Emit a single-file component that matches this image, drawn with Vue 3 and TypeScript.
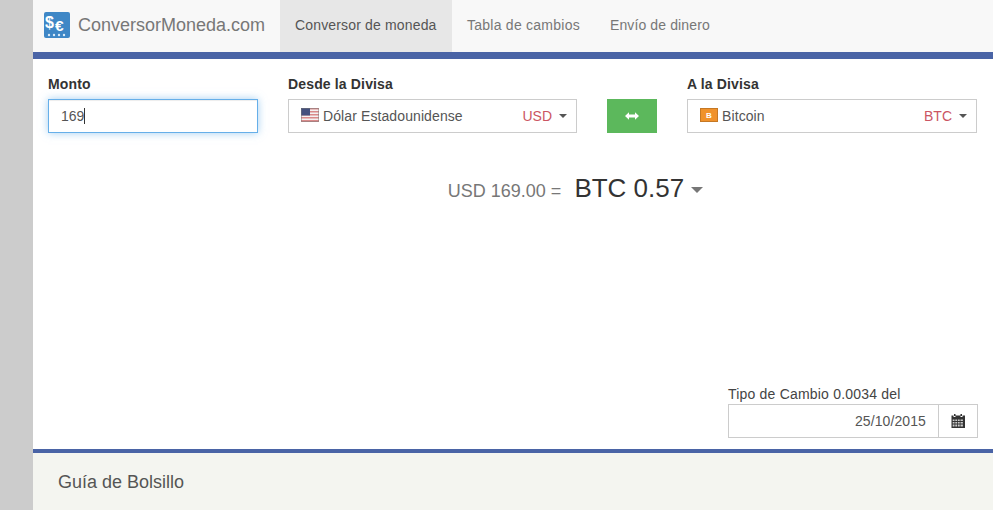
<script setup lang="ts">
const tabs = [
  { label: 'Conversor de moneda', active: true },
  { label: 'Tabla de cambios', active: false },
  { label: 'Envío de dinero', active: false }
]
</script>

<template>
  <div class="page">
    <div class="wrap">
      <nav class="navbar">
        <a class="brand">
          <svg class="logo" width="26" height="26" viewBox="0 0 26 26">
            <rect width="26" height="26" rx="2" fill="#3f87c6" />
            <text x="1" y="16" class="logo-text" font-size="16">$</text>
            <text x="11" y="19" class="logo-text" font-size="15.500">€</text>
            <g fill="#dcebf7">
              <circle cx="5" cy="23" r="1.200" />
              <circle cx="10" cy="23" r="1.200" />
              <circle cx="15" cy="23" r="1.200" />
              <circle cx="20" cy="23" r="1.200" />
            </g>
          </svg>
          <span>ConversorMoneda.com</span>
        </a>
        <a v-for="t in tabs" :key="t.label" class="tab" :class="{ active: t.active }">{{ t.label }}</a>
      </nav>

      <main class="content">
        <div class="form-row">
          <div class="field">
            <label>Monto</label>
            <div class="amount"><span>169</span><i class="caret-line"></i></div>
          </div>
          <div class="field">
            <label>Desde la Divisa</label>
            <div class="select">
              <svg class="flag" width="18" height="14" viewBox="0 0 18 14">
                <rect width="18" height="14" fill="#f4f1f1" />
                <g fill="#d98a8a">
                  <rect y="0" width="18" height="1.500" />
                  <rect y="3" width="18" height="1.500" />
                  <rect y="6" width="18" height="1.500" />
                  <rect y="9" width="18" height="1.500" />
                  <rect y="12" width="18" height="2" />
                </g>
                <rect width="9" height="7.500" fill="#44507e" />
                <rect x=".5" y=".5" width="17" height="13" fill="none" stroke="#777" stroke-opacity=".5" />
              </svg>
              <span class="name">Dólar Estadounidense</span>
              <span class="code">USD</span>
              <b class="caret"></b>
            </div>
          </div>
          <button class="swap" type="button" aria-label="Intercambiar">
            <svg width="14" height="8" viewBox="0 0 14 8" fill="#fff">
              <path d="M0 4 4 .2v2.300h6V.2L14 4l-4 3.800V5.500H4v2.300z" />
            </svg>
          </button>
          <div class="field">
            <label>A la Divisa</label>
            <div class="select">
              <svg class="flag" width="18" height="14" viewBox="0 0 18 14">
                <rect width="18" height="14" fill="#f0922b" />
                <rect x=".5" y=".5" width="17" height="13" fill="none" stroke="#a8671f" stroke-opacity=".6" />
                <text x="9" y="10" text-anchor="middle" class="btc">B</text>
              </svg>
              <span class="name">Bitcoin</span>
              <span class="code">BTC</span>
              <b class="caret"></b>
            </div>
          </div>
        </div>

        <div class="result">
          <span class="from">USD 169.00 =</span>
          <span class="to">BTC 0.57</span>
          <b class="caret big"></b>
        </div>

        <div class="rate">
          <div class="rate-box">
            <div class="rate-label">Tipo de Cambio 0.0034 del</div>
            <div class="date-group">
              <div class="date">25/10/2015</div>
              <div class="addon">
                <svg width="14" height="14" viewBox="0 0 14 14" fill="#333">
                  <path d="M3 0h1.500v2H3zM9.500 0H11v2H9.500zM.5 1.500h2V3h2V1.500h5V3h2V1.500h2.500V14H.5z" />
                  <g fill="#fff" fill-opacity=".75">
                    <rect x="1.700" y="5.500" width="1.800" height="1.500" />
                    <rect x="4.300" y="5.500" width="1.800" height="1.500" />
                    <rect x="6.900" y="5.500" width="1.800" height="1.500" />
                    <rect x="9.500" y="5.500" width="2.400" height="1.500" />
                    <rect x="1.700" y="8" width="1.800" height="1.500" />
                    <rect x="4.300" y="8" width="1.800" height="1.500" />
                    <rect x="6.900" y="8" width="1.800" height="1.500" />
                    <rect x="9.500" y="8" width="2.400" height="1.500" />
                    <rect x="1.700" y="10.500" width="1.800" height="2" />
                    <rect x="4.300" y="10.500" width="1.800" height="2" />
                    <rect x="6.900" y="10.500" width="1.800" height="2" />
                    <rect x="9.500" y="10.500" width="2.400" height="2" />
                  </g>
                </svg>
              </div>
            </div>
          </div>
        </div>
      </main>

      <section class="guide">
        <h3>Guía de Bolsillo</h3>
      </section>
    </div>
  </div>
</template>

<style>
html,
body {
  margin: 0;
  background: #fff;
}
</style>

<style scoped>
.page {
  width: 1007px;
  height: 510px;
  overflow: hidden;
  box-sizing: border-box;
  padding-left: 33px;
  background: linear-gradient(to right, #cccccc 33px, #ffffff 33px);
  font-family: "Liberation Sans", Arial, sans-serif;
  font-size: 14px;
  color: #333;
}

.wrap {
  width: 960px;
}

.navbar {
  display: flex;
  height: 52px;
  background: #f8f8f8;
  border-bottom: 7px solid #4a64a6;
}

.brand {
  display: flex;
  align-items: center;
  gap: 8px;
  width: 247px;
  padding: 0 0 2px 11px;
  box-sizing: border-box;
  font-size: 18px;
  color: #777;
}

.logo {
  flex: none;
}

.logo-text {
  fill: #fff;
  font-family: "Liberation Sans", Arial, sans-serif;
  font-weight: 700;
}

.tab {
  padding: 0 15px;
  line-height: 50px;
  letter-spacing: 0.25px;
  color: #777;
}

.tab:last-child {
  letter-spacing: 0.12px;
}

.tab.active {
  width: 172px;
  box-sizing: border-box;
  background: #e7e7e7;
  letter-spacing: 0.16px;
  white-space: nowrap;
  color: #555;
}

.content {
  padding: 0 15px;
}

.form-row {
  display: grid;
  grid-template-columns: 210px 289px 50px 290px;
  column-gap: 30px;
  align-items: end;
  padding-top: 15px;
}

label {
  display: block;
  margin-bottom: 5px;
  font-weight: 700;
  line-height: 20px;
  letter-spacing: 0.15px;
}

.amount {
  display: flex;
  align-items: center;
  height: 34px;
  box-sizing: border-box;
  padding: 0 12px;
  border: 1px solid #66afe9;
  box-shadow: inset 0 1px 1px rgba(0, 0, 0, 0.075), 0 0 8px rgba(102, 175, 233, 0.6);
  color: #555;
}

.caret-line {
  width: 1px;
  height: 16px;
  background: #333;
}

.select {
  display: flex;
  align-items: center;
  height: 34px;
  box-sizing: border-box;
  padding: 0 9px 0 12px;
  border: 1px solid #ccc;
  color: #555;
}

.flag {
  flex: none;
  margin-right: 4px;
  margin-top: -3px;
}

.btc {
  fill: #fff;
  font-family: "Liberation Sans", Arial, sans-serif;
  font-size: 8px;
  font-weight: 700;
}

.name {
  flex: 1;
  letter-spacing: 0.1px;
}

.code {
  color: #cb5563;
  margin-right: 7px;
}

.caret {
  display: inline-block;
  width: 0;
  height: 0;
  border-top: 4px solid #555;
  border-left: 4px solid transparent;
  border-right: 4px solid transparent;
}

.swap {
  display: flex;
  align-items: center;
  justify-content: center;
  height: 34px;
  padding: 0;
  border: none;
  background: #5cb85c;
}

.result {
  display: flex;
  align-items: baseline;
  justify-content: center;
  box-sizing: border-box;
  height: 70px;
  padding: 40px 0 0 125px;
  color: #777;
  font-size: 18px;
}

.to {
  margin-left: 13px;
  font-size: 26px;
  color: #333;
}

.caret.big {
  margin-left: 7px;
  border-top: 6px solid #777;
  border-left: 6px solid transparent;
  border-right: 6px solid transparent;
  align-self: center;
  position: relative;
  top: 2px;
}

.rate {
  display: flex;
  justify-content: flex-end;
  padding-top: 181px;
}

.rate-box {
  width: 250px;
}

.rate-label {
  line-height: 20px;
  letter-spacing: 0.2px;
  color: #444;
}

.date-group {
  display: flex;
  height: 34px;
  box-sizing: border-box;
  border: 1px solid #ccc;
}

.date {
  flex: 1;
  padding-right: 12px;
  line-height: 32px;
  text-align: right;
  letter-spacing: 0.1px;
  color: #555;
}

.addon {
  display: flex;
  align-items: center;
  justify-content: center;
  width: 39px;
  box-sizing: border-box;
  border-left: 1px solid #ccc;
}

.guide {
  margin-top: 11px;
  height: 60px;
  padding: 0 25px;
  background: #f4f5f0;
  border-top: 4px solid #4a64a6;
}

h3 {
  margin: 0;
  padding-top: 19px;
  font-size: 18px;
  font-weight: 400;
  line-height: 20px;
  color: #555;
}
</style>
